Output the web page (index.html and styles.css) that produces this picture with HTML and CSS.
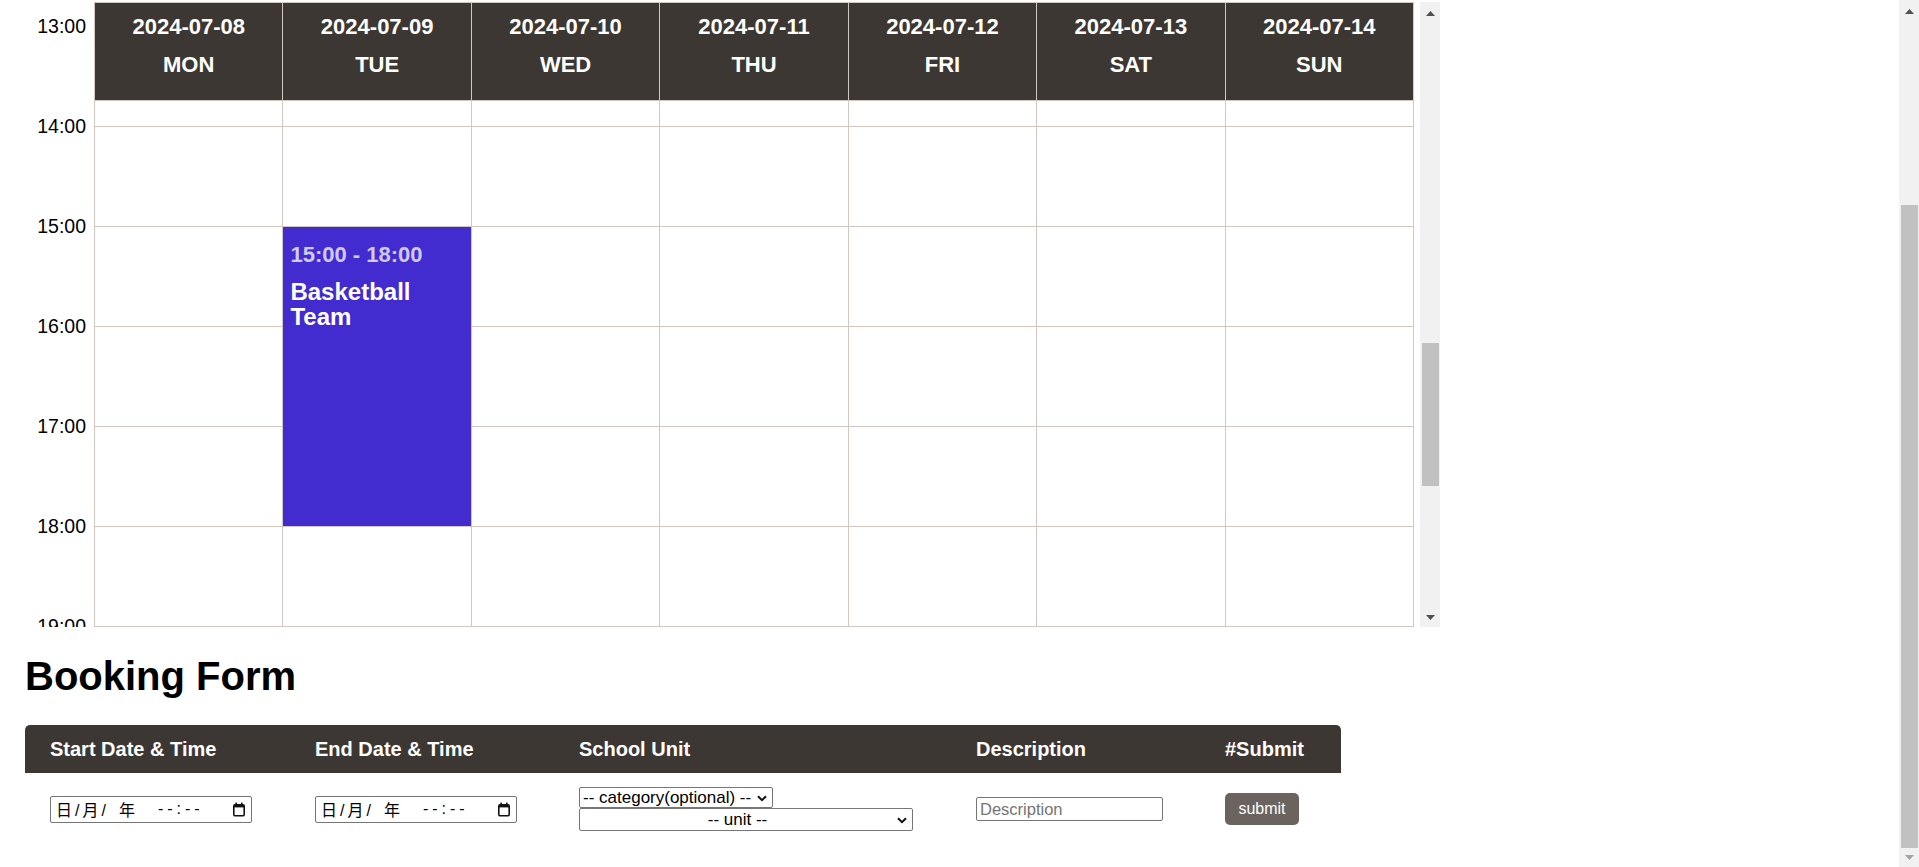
FILE: index.html
```html
<!DOCTYPE html>
<html lang="en">
<head>
<meta charset="utf-8">
<title>Booking</title>
<link rel="stylesheet" href="styles.css">
</head>
<body>
<div class="page">
  <div class="cal-wrap">
    <section class="calendar" id="calendar">
      <div class="cal-inner">
        <div class="time-col">
          <div class="time-label">00:00</div>
          <div class="time-label">01:00</div>
          <div class="time-label">02:00</div>
          <div class="time-label">03:00</div>
          <div class="time-label">04:00</div>
          <div class="time-label">05:00</div>
          <div class="time-label">06:00</div>
          <div class="time-label">07:00</div>
          <div class="time-label">08:00</div>
          <div class="time-label">09:00</div>
          <div class="time-label">10:00</div>
          <div class="time-label">11:00</div>
          <div class="time-label">12:00</div>
          <div class="time-label">13:00</div>
          <div class="time-label">14:00</div>
          <div class="time-label">15:00</div>
          <div class="time-label">16:00</div>
          <div class="time-label">17:00</div>
          <div class="time-label">18:00</div>
          <div class="time-label">19:00</div>
          <div class="time-label">20:00</div>
          <div class="time-label">21:00</div>
          <div class="time-label">22:00</div>
          <div class="time-label">23:00</div>
        </div>
        <div class="days">
          <div class="day-head">
            <div class="day-head-cell"><div>2024-07-08</div><div>MON</div></div>
            <div class="day-head-cell"><div>2024-07-09</div><div>TUE</div></div>
            <div class="day-head-cell"><div>2024-07-10</div><div>WED</div></div>
            <div class="day-head-cell"><div>2024-07-11</div><div>THU</div></div>
            <div class="day-head-cell"><div>2024-07-12</div><div>FRI</div></div>
            <div class="day-head-cell"><div>2024-07-13</div><div>SAT</div></div>
            <div class="day-head-cell"><div>2024-07-14</div><div>SUN</div></div>
          </div>
          <div class="day-body">
            <div class="day-col"></div>
            <div class="day-col">
              <div class="event" style="margin-top:1501px;height:299px">
                <div class="event-time">15:00 - 18:00</div>
                <div class="event-title">Basketball Team</div>
              </div>
            </div>
            <div class="day-col"></div>
            <div class="day-col"></div>
            <div class="day-col"></div>
            <div class="day-col"></div>
            <div class="day-col"></div>
          </div>
        </div>
      </div>
    </section>
    <div class="vscroll" aria-hidden="true">
      <div class="vs-btn vs-btn-up"><svg width="9" height="5" viewBox="0 0 9 5"><polygon points="4.5,0 9,5 0,5" fill="#505050"/></svg></div>
      <div class="vs-track"><div class="vs-thumb" style="margin-top:322px;height:143px"></div></div>
      <div class="vs-btn"><svg width="9" height="5" viewBox="0 0 9 5"><polygon points="0,0 9,0 4.5,5" fill="#505050"/></svg></div>
    </div>
  </div>

  <section class="booking">
    <h2 class="booking-title">Booking Form</h2>
    <div class="booking-table">
      <div class="bt-row bt-head">
        <div class="bt-cell">Start Date &amp; Time</div>
        <div class="bt-cell">End Date &amp; Time</div>
        <div class="bt-cell">School Unit</div>
        <div class="bt-cell">Description</div>
        <div class="bt-cell">#Submit</div>
      </div>
      <div class="bt-row bt-body">
        <div class="bt-cell">
          <div class="dt-input">
            <span class="dt-date">日/月/</span><span class="dt-year">年</span><span class="dt-time">--:--</span>
            <svg class="dt-icon" width="14" height="15" viewBox="0 0 14 15"><rect x="1.8" y="2.8" width="10.4" height="11" rx="1.4" fill="none" stroke="#111" stroke-width="1.6"/><rect x="1.8" y="2.8" width="10.4" height="2.6" fill="#111"/><rect x="3.4" y="0.6" width="1.6" height="3" fill="#111"/><rect x="9" y="0.6" width="1.6" height="3" fill="#111"/></svg>
          </div>
        </div>
        <div class="bt-cell">
          <div class="dt-input">
            <span class="dt-date">日/月/</span><span class="dt-year">年</span><span class="dt-time">--:--</span>
            <svg class="dt-icon" width="14" height="15" viewBox="0 0 14 15"><rect x="1.8" y="2.8" width="10.4" height="11" rx="1.4" fill="none" stroke="#111" stroke-width="1.6"/><rect x="1.8" y="2.8" width="10.4" height="2.6" fill="#111"/><rect x="3.4" y="0.6" width="1.6" height="3" fill="#111"/><rect x="9" y="0.6" width="1.6" height="3" fill="#111"/></svg>
          </div>
        </div>
        <div class="bt-cell bt-selects">
          <div class="sel-wrap sel-wrap-category">
            <select class="sel sel-category">
              <option>-- category(optional) --</option>
            </select>
            <svg class="sel-chevron" width="10" height="7" viewBox="0 0 10 7"><polyline points="1,1.2 5,5.2 9,1.2" fill="none" stroke="#111" stroke-width="2"/></svg>
          </div>
          <div class="sel-wrap sel-wrap-unit">
            <select class="sel sel-unit">
              <option>-- unit --</option>
            </select>
            <svg class="sel-chevron" width="10" height="7" viewBox="0 0 10 7"><polyline points="1,1.2 5,5.2 9,1.2" fill="none" stroke="#111" stroke-width="2"/></svg>
          </div>
        </div>
        <div class="bt-cell">
          <input class="desc-input" type="text" placeholder="Description">
        </div>
        <div class="bt-cell">
          <button class="submit-btn" type="button">submit</button>
        </div>
      </div>
    </div>
  </section>
</div>
<div class="page-scroll" aria-hidden="true">
  <div class="vs-btn vs-btn-up"><svg width="9" height="5" viewBox="0 0 9 5"><polygon points="4.5,0 9,5 0,5" fill="#505050"/></svg></div>
  <div class="vs-track"><div class="vs-thumb" style="margin-top:186px;height:643px"></div></div>
  <div class="vs-btn"><svg width="9" height="5" viewBox="0 0 9 5"><polygon points="0,0 9,0 4.5,5" fill="#a3a3a3"/></svg></div>
</div>
<script src="script.js"></script>
</body>
</html>
```

FILE: styles.css
```css
* {
  box-sizing: border-box;
}

html,
body {
  margin: 0;
  padding: 0;
}

body {
  display: flex;
  align-items: flex-start;
  height: 867px;
  overflow: hidden;
  font-family: "Liberation Sans", Arial, sans-serif;
  color: #000;
  background: #fff;
}

.page {
  flex: 1;
  min-width: 0;
  padding: 2px 0 22px 25px;
}

/* fake scrollbars (drawn, since native ones are hidden) */
.page-scroll {
  width: 20px;
  height: 867px;
  flex: none;
  display: flex;
  flex-direction: column;
  background: #f1f1f1;
}

.vscroll {
  width: 20px;
  flex: none;
  display: flex;
  flex-direction: column;
  background: #f1f1f1;
}

.vs-btn {
  height: 19px;
  flex: none;
  display: flex;
  align-items: center;
  justify-content: center;
}

.vs-btn-up {
  padding-top: 4px;
}

.vs-track {
  flex: 1;
  padding: 0 1px 0 2px;
}

.vs-thumb {
  background: #c1c1c1;
}

/* calendar */
.cal-wrap {
  display: flex;
  width: 1415px;
  height: 625px;
}

.calendar {
  width: 1395px;
  height: 625px;
  flex: none;
  overflow-y: scroll;
  overflow-x: hidden;
  scrollbar-width: none;
}

.cal-inner {
  display: flex;
  align-items: flex-start;
}

.time-col {
  width: 69px;
  flex: none;
  padding-top: 49px;
}

.time-label {
  height: 100px;
  display: flex;
  align-items: center;
  justify-content: flex-end;
  padding-right: 8px;
  font-size: 19.5px;
}

.days {
  width: 1320px;
  flex: none;
}

.day-head {
  position: sticky;
  top: 0;
  z-index: 2;
  display: grid;
  grid-template-columns: repeat(7, 1fr);
  height: 99px;
  background: #3d3733;
  border-top: 1px solid #d5c6bf;
  border-bottom: 1px solid #d5c6bf;
  border-right: 1px solid #d5c6bf;
}

.day-head-cell {
  border-left: 1px solid #d5c6bf;
  color: #fff;
  font-weight: bold;
  font-size: 22px;
  line-height: 38px;
  text-align: center;
  padding-top: 5px;
}

.day-body {
  display: grid;
  grid-template-columns: repeat(7, 1fr);
  border-right: 1px solid #d5c6bf;
}

.day-col {
  height: 2400px;
  border-left: 1px solid #d5c6bf;
  background-image: repeating-linear-gradient(to bottom, #d5c6bf 0, #d5c6bf 1px, transparent 1px, transparent 100px);
}

.event {
  background: #432ccf;
  color: #fff;
  padding: 15px 7px 0;
  font-weight: bold;
}

.event-time {
  font-size: 22px;
  line-height: 25px;
  color: rgba(255, 255, 255, 0.75);
}

.event-title {
  font-size: 24px;
  line-height: 25px;
  margin-top: 12px;
}

/* booking form */
.booking-title {
  font-size: 40px;
  line-height: 46px;
  font-weight: bold;
  margin: 26px 0 26px;
}

.booking-table {
  width: 1316px;
}

.bt-row {
  display: grid;
  grid-template-columns: 265px 264px 397px 249px 141px;
}

.bt-head {
  background: #3d3733;
  color: #fff;
  border-radius: 5px 5px 0 0;
  height: 48px;
  align-items: center;
  font-weight: bold;
  font-size: 20px;
}

.bt-cell {
  padding-left: 25px;
}

.bt-body {
  padding: 14px 0;
  align-items: center;
}

.bt-selects {
  display: flex;
  flex-direction: column;
  align-items: flex-start;
}

.dt-input {
  width: 202px;
  height: 27px;
  display: flex;
  align-items: center;
  padding: 0 5px;
  border: 1px solid #767676;
  border-radius: 2px;
  font-family: "Liberation Sans", "Noto Sans CJK SC", sans-serif;
  font-size: 16px;
  color: #000;
  white-space: nowrap;
}

.dt-date {
  letter-spacing: 3px;
}

.dt-year {
  margin-left: 10px;
}

.dt-time {
  margin-left: 23px;
  letter-spacing: 4px;
}

.dt-icon {
  margin-left: auto;
  flex: none;
}

.sel-wrap {
  position: relative;
}

.sel {
  display: block;
  appearance: none;
  -webkit-appearance: none;
  font-family: "Liberation Sans", Arial, sans-serif;
  font-size: 17px;
  line-height: 19px;
  color: #000;
  background: #fff;
  border: 1px solid #767676;
  border-radius: 2px;
  padding: 0 20px 0 3px;
  margin: 0;
}

.sel-category {
  width: 194px;
  height: 21px;
}

.sel-unit {
  width: 334px;
  height: 23px;
  text-align-last: center;
}

.sel-chevron {
  position: absolute;
  right: 6px;
  top: 50%;
  margin-top: -3px;
  pointer-events: none;
}

.desc-input {
  display: block;
  width: 187px;
  height: 24px;
  font-family: "Liberation Sans", Arial, sans-serif;
  font-size: 16.5px;
  padding: 1px 3px;
  border: 1px solid #767676;
  border-radius: 2px;
  margin: 0;
}

.desc-input::placeholder {
  color: #757575;
}

.submit-btn {
  display: block;
  width: 74px;
  height: 32px;
  background: #6b635e;
  color: #fff;
  border: none;
  border-radius: 5px;
  font-family: "Liberation Sans", Arial, sans-serif;
  font-size: 16px;
  padding: 0;
}
```

FILE: script.js
```js
(function () {
  var cal = document.getElementById('calendar');
  if (cal) {
    cal.scrollTop = 1375;
  }
})();
```
